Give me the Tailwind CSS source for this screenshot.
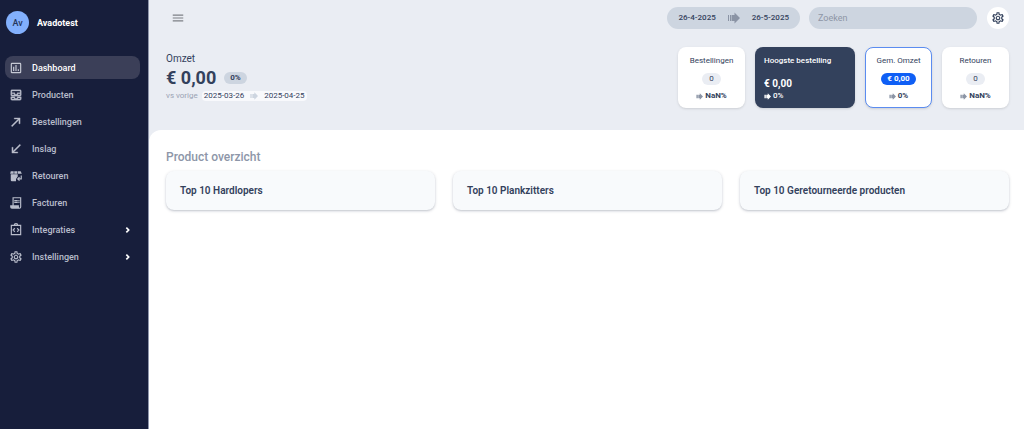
<!DOCTYPE html>
<html lang="nl">

<head>
    <meta charset="UTF-8">
    <meta name="viewport" content="width=device-width, initial-scale=1.0">
    <title>Avadotest - Dashboard</title>
    <script src="https://cdn.jsdelivr.net/npm/@tailwindcss/browser@4"></script>
</head>

<body class="flex min-h-screen bg-white font-['Roboto',sans-serif] text-[8px] leading-3 text-[#33415c]">

    <!-- Shared icons -->
    <svg class="hidden" xmlns="http://www.w3.org/2000/svg">
        <symbol id="icon-settings" viewBox="0 0 24 24">
            <path
                d="M19.43 12.98c.04-.32.07-.64.07-.98 0-.34-.03-.66-.07-.98l2.11-1.65c.19-.15.24-.42.12-.64l-2-3.46c-.09-.16-.26-.25-.44-.25-.06 0-.12.01-.17.03l-2.49 1c-.52-.4-1.08-.73-1.69-.98l-.38-2.65C14.46 2.18 14.25 2 14 2h-4c-.25 0-.46.18-.49.42l-.38 2.65c-.61.25-1.17.59-1.69.98l-2.49-1c-.06-.02-.12-.03-.18-.03-.17 0-.34.09-.43.25l-2 3.46c-.13.22-.07.49.12.64l2.11 1.65c-.04.32-.07.65-.07.98 0 .33.03.66.07.98l-2.11 1.65c-.19.15-.24.42-.12.64l2 3.46c.09.16.26.25.44.25.06 0 .12-.01.17-.03l2.49-1c.52.4 1.08.73 1.69.98l.38 2.65c.03.24.24.42.49.42h4c.25 0 .46-.18.49-.42l.38-2.65c.61-.25 1.17-.59 1.69-.98l2.49 1c.06.02.12.03.18.03.17 0 .34-.09.43-.25l2-3.46c.12-.22.07-.49-.12-.64l-2.11-1.65zm-1.98-1.71c.04.31.05.52.05.73 0 .21-.02.43-.05.73l-.14 1.13.89.7 1.08.84-.7 1.21-1.27-.51-1.04-.42-.9.68c-.43.32-.84.56-1.25.73l-1.06.43-.16 1.13-.2 1.35h-1.4l-.19-1.35-.16-1.13-1.06-.43c-.43-.18-.83-.41-1.23-.71l-.91-.7-1.06.43-1.27.51-.7-1.21 1.08-.84.89-.7-.14-1.13c-.03-.31-.05-.54-.05-.74s.02-.43.05-.73l.14-1.13-.89-.7-1.08-.84.7-1.21 1.27.51 1.04.42.9-.68c.43-.32.84-.56 1.25-.73l1.06-.43.16-1.13.2-1.35h1.39l.19 1.35.16 1.13 1.06.43c.43.18.83.41 1.23.71l.91.7 1.06-.43 1.27-.51.7 1.21-1.07.85-.89.7.14 1.13zM12 8c-2.21 0-4 1.79-4 4s1.79 4 4 4 4-1.79 4-4-1.79-4-4-4zm0 6c-1.1 0-2-.9-2-2s.9-2 2-2 2 .9 2 2-.9 2-2 2z" />
        </symbol>
        <symbol id="icon-arrow" viewBox="0 0 24 24">
            <path d="M0 6h2v12H0zM4 6h3v12H4zM8 6h5V1l11 11-11 11v-5H8z" />
        </symbol>
        <symbol id="icon-chevron" viewBox="0 0 24 24">
            <path d="M7 5l7 7-7 7" fill="none" stroke="currentColor" stroke-width="5" />
        </symbol>
    </svg>

    <!-- Sidebar -->
    <aside class="w-[149px] shrink-0 border-r border-[#8f96ab] bg-[#171e3b] pt-[11px] pr-1 pl-[5px] text-[#b9bdcb]">
        <div class="flex items-center gap-2 pl-px">
            <span
                class="flex size-[23px] items-center justify-center rounded-full bg-[#82b0fd] text-[9px] font-medium text-[#26365c]">Av</span>
            <span class="text-[9px] font-bold text-white">Avadotest</span>
        </div>
        <nav class="mt-[22px] mr-1 flex flex-col gap-1 text-[9px] font-medium">
            <a href="#" class="flex h-[23px] items-center rounded-lg bg-[#3b3f58] pl-1 text-white">
                <svg class="mr-[9px] size-[14px] text-[#c6c9d4]" viewBox="0 0 24 24" fill="currentColor">
                    <path
                        d="M19 3H5a2 2 0 0 0-2 2v14a2 2 0 0 0 2 2h14a2 2 0 0 0 2-2V5a2 2 0 0 0-2-2zm0 16H5V5h14v14zM7 10h2v7H7zm4-3h2v10h-2zm4 7h2v3h-2z" />
                </svg>
                Dashboard
            </a>
            <a href="#" class="flex h-[23px] items-center pl-1">
                <svg class="mr-[9px] size-[14px]" viewBox="0 0 24 24" fill="currentColor">
                    <path
                        d="M19 3H5c-1.1 0-2 .9-2 2v7c0 1.1.9 2 2 2h14c1.1 0 2-.9 2-2V5c0-1.1-.9-2-2-2zM5 10h3.13c.21.78.67 1.47 1.27 2H5v-2zm14 2h-4.4c.6-.53 1.06-1.22 1.27-2H19v2zm0-4h-5v1c0 1.07-.93 2-2 2s-2-.93-2-2V8H5V5h14v3zm-5 7v1c0 .47-.19.9-.48 1.25-.37.45-.92.75-1.52.75s-1.15-.3-1.52-.75c-.29-.35-.48-.78-.48-1.25v-1H3v4c0 1.1.9 2 2 2h14c1.1 0 2-.9 2-2v-4h-7zm-9 2h3.13c.02.09.06.17.09.25.24.68.65 1.28 1.18 1.75H5v-2zm14 2h-4.4c.54-.47.95-1.07 1.18-1.75.03-.08.07-.17.09-.25H19v2z"
                        stroke="currentColor" stroke-width="0.5" />
                </svg>
                Producten
            </a>
            <a href="#" class="flex h-[23px] items-center pl-1">
                <svg class="mr-[9px] size-[14px]" viewBox="0 0 24 24" fill="currentColor">
                    <path d="M9 5v2h6.590L4 18.590 5.410 20 17 8.410V15h2V5z" stroke="currentColor" stroke-width="0.6" />
                </svg>
                Bestellingen
            </a>
            <a href="#" class="flex h-[23px] items-center pl-1">
                <svg class="mr-[9px] size-[14px]" viewBox="0 0 24 24" fill="currentColor">
                    <path d="M20 5.410 18.590 4 7 15.590V9H5v10h10v-2H8.410z" stroke="currentColor" stroke-width="0.6" />
                </svg>
                Inslag
            </a>
            <a href="#" class="flex h-[23px] items-center pl-1">
                <svg class="mr-[9px] size-[14px]" viewBox="0 0 24 24" fill="currentColor">
                    <path d="M3 4h5v4H2zM9 4h5v4H9zM15 4h5l2 4h-7zM3 9h12v4l-3 4v4H5a2 2 0 0 1-2-2z" />
                    <path d="M21 11v6h-6m3-3-3 3 3 3" fill="none" stroke="currentColor" stroke-width="2" />
                </svg>
                Retouren
            </a>
            <a href="#" class="flex h-[23px] items-center pl-1">
                <svg class="mr-[9px] size-[14px]" viewBox="0 0 24 24" fill="currentColor">
                    <path
                        d="M6 2h15v17a3 3 0 0 1-3 3H5a3 3 0 0 1-3-3v-3h4zm2 2v12h9v3a1 1 0 0 0 2 0V4zM9 7h6v2H9zm7 0h2v2h-2zm-7 3h6v2H9zm7 0h2v2h-2z" />
                </svg>
                Facturen
            </a>
            <a href="#" class="flex h-[23px] items-center pl-1">
                <svg class="mr-[9px] size-[14px]" viewBox="0 0 24 24" fill="none" stroke="currentColor"
                    stroke-width="2">
                    <path d="M4 4h16v16H4zM9 4a3 3 0 0 1 6 0M10 9l-3 3 3 3M14 9l3 3-3 3" />
                </svg>
                Integraties
                <svg class="mr-2 ml-auto size-2 text-white"><use href="#icon-chevron" /></svg>
            </a>
            <a href="#" class="flex h-[23px] items-center pl-1">
                <svg class="mr-[9px] size-[14px]" fill="currentColor"><use href="#icon-settings" /></svg>
                Instellingen
                <svg class="mr-2 ml-auto size-2 text-white"><use href="#icon-chevron" /></svg>
            </a>
        </nav>
    </aside>

    <div class="flex min-w-0 grow flex-col bg-[#eaedf3]">
        <!-- Top bar -->
        <header class="flex items-center pt-[7px] pr-[15px] pl-[22px]">
            <button type="button" aria-label="Menu" class="text-[#7d8086]">
                <svg class="size-[14px]" viewBox="0 0 24 24" fill="currentColor">
                    <path d="M3 6h18v2H3zm0 5h18v2H3zm0 5h18v2H3z" />
                </svg>
            </button>
            <div class="ml-auto flex h-[22px] items-center gap-3 rounded-full bg-[#cdd5e0] px-[11px] font-medium">
                <span>26-4-2025</span>
                <svg class="size-3 text-[#8b94a5]" fill="currentColor"><use href="#icon-arrow" /></svg>
                <span>26-5-2025</span>
            </div>
            <input type="search" aria-label="Zoeken" placeholder="Zoeken"
                class="ml-[9px] h-[22px] w-[168px] rounded-full bg-[#cdd5e0] px-[9px] text-[9px] placeholder:text-[#8d96a6]">
            <button type="button" aria-label="Instellingen"
                class="ml-[10px] flex size-[22px] items-center justify-center rounded-full bg-white">
                <svg class="size-[14px]" fill="currentColor"><use href="#icon-settings" /></svg>
            </button>
        </header>

        <!-- Revenue and stats -->
        <section class="mt-[18px] flex justify-between pr-[15px] pl-[17px]">
            <div class="pt-[6px]">
                <h2 class="text-[10px]">Omzet</h2>
                <div class="mt-px flex items-center gap-2">
                    <span class="text-[18px] leading-6 font-bold">€ 0,00</span>
                    <span class="rounded-full bg-[#cdd5e0] px-[6px] font-bold">0%</span>
                </div>
                <div class="flex items-center gap-1 text-[#9aa3b3]">
                    vs vorige
                    <span class="flex items-center gap-[6px] rounded-sm bg-[#f8f9fc] px-[2px] leading-[10px] text-[#33415c]">
                        2025-03-26
                        <svg class="size-2 text-[#cdd5e0]" fill="currentColor"><use href="#icon-arrow" /></svg>
                        2025-04-25
                    </span>
                </div>
            </div>
            <div class="flex gap-[10px]">
                <div class="flex h-[61px] w-[67px] flex-col items-center justify-between rounded-lg bg-white pt-2 pb-[6px] shadow-sm">
                    <span>Bestellingen</span>
                    <span class="rounded-full bg-[#eaedf3] px-[7px]">0</span>
                    <span class="flex items-center gap-[2px] font-bold">
                        <svg class="size-[7px] text-[#8b94a5]" fill="currentColor"><use href="#icon-arrow" /></svg>
                        NaN%
                    </span>
                </div>
                <div class="flex h-[61px] w-[100px] flex-col rounded-lg bg-[#33415c] px-[9px] pt-2 pb-[6px] font-medium text-white shadow-sm">
                    <span>Hoogste bestelling</span>
                    <span class="mt-auto text-[10px] font-bold">€ 0,00</span>
                    <span class="flex items-center gap-[2px]">
                        <svg class="size-[7px]" fill="currentColor"><use href="#icon-arrow" /></svg>
                        0%
                    </span>
                </div>
                <div class="flex h-[61px] w-[67px] flex-col items-center justify-between rounded-lg border border-[#5b8cf0] bg-white pt-[7px] pb-[5px] shadow-sm">
                    <span>Gem. Omzet</span>
                    <span class="rounded-full bg-[#0f5ff5] px-[6px] font-bold text-white">€ 0,00</span>
                    <span class="flex items-center gap-[2px] font-bold">
                        <svg class="size-[7px] text-[#8b94a5]" fill="currentColor"><use href="#icon-arrow" /></svg>
                        0%
                    </span>
                </div>
                <div class="flex h-[61px] w-[67px] flex-col items-center justify-between rounded-lg bg-white pt-2 pb-[6px] shadow-sm">
                    <span>Retouren</span>
                    <span class="rounded-full bg-[#eaedf3] px-[7px]">0</span>
                    <span class="flex items-center gap-[2px] font-bold">
                        <svg class="size-[7px] text-[#8b94a5]" fill="currentColor"><use href="#icon-arrow" /></svg>
                        NaN%
                    </span>
                </div>
            </div>
        </section>

        <!-- Products -->
        <main class="mt-[22px] grow rounded-tl-xl bg-white pt-[19px] pr-[15px] pl-[17px]">
            <h2 class="text-[12px] leading-4 font-medium text-[#8d96a8]">Product overzicht</h2>
            <div class="mt-[6px] grid grid-cols-3 gap-[18px] text-[10px] font-semibold">
                <h3 class="rounded-lg bg-[#f8fafc] px-[14px] py-[13px] leading-[13px] shadow-sm shadow-[#33415c]/25">Top 10 Hardlopers</h3>
                <h3 class="rounded-lg bg-[#f8fafc] px-[14px] py-[13px] leading-[13px] shadow-sm shadow-[#33415c]/25">Top 10 Plankzitters</h3>
                <h3 class="rounded-lg bg-[#f8fafc] px-[14px] py-[13px] leading-[13px] shadow-sm shadow-[#33415c]/25">Top 10 Geretourneerde producten</h3>
            </div>
        </main>
    </div>
</body>

</html>
